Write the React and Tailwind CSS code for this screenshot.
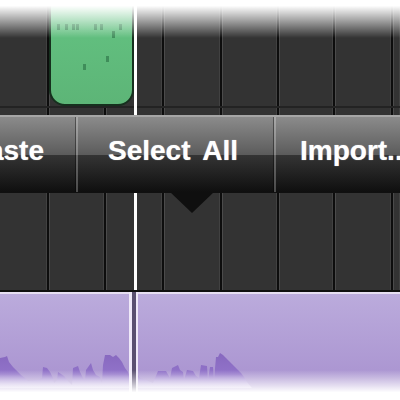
const cells = ['w-[49px]', 'w-[57px]', 'w-[58px]', 'w-[58px]', 'w-[57px]', 'w-[56px]', 'w-[58px]', 'w-[7px]'];

const notes = [
  [57, 24, 'h-[6px]'], [65, 24, 'h-[6px]'], [72, 24, 'h-[6px]'], [76, 24, 'h-[6px]'], [94, 24, 'h-[6px]'],
  [100, 24, 'h-[6px]'], [119, 24, 'h-[6px]'], [112, 31, 'h-[7px]'], [106, 56, 'h-[6px]'], [83, 64, 'h-[6px]'],
];

function Grid({ className }) {
  return (
    <div className={'flex ' + className}>
      {cells.map((w, i) => (
        <div key={i} className={w + ' h-full shrink-0 border-r-2 border-[#0d0d0d] shadow-[1px_0_0_#4b4b4b,inset_-1px_0_0_#414141] last:border-r-0'} />
      ))}
    </div>
  );
}

function MenuItem({ width, justify, children }) {
  return (
    <div className={width + ' ' + justify + ' shrink-0 h-full flex items-center pb-[8px] border-r-2 border-r-white/25 shadow-[inset_-1px_0_0_#00000066] last:border-r-0 last:shadow-none overflow-hidden whitespace-nowrap'}>
      {children}
    </div>
  );
}

function Waveform() {
  return (
    <svg className="absolute left-0 bottom-0 w-[400px] h-[108px]" viewBox="0 292 400 108">
      <defs>
        <linearGradient id="wave" gradientUnits="userSpaceOnUse" x1="0" y1="353" x2="0" y2="388">
          <stop offset="0" stopColor="#8768bf" />
          <stop offset="0.6" stopColor="#9173c9" />
          <stop offset="1" stopColor="#cfc2e8" />
        </linearGradient>
      </defs>
      <path
        fill="url(#wave)"
        d="M0 358L5 357L7 356L9 362L13 367L17 371L21 375L25 378L28 381L38 380L42 378L43 367L47 368L50 372L53 378L54 383L57 380L58 372L64 376L68 381L72 385L73 368L78 366L80 372L83 378L85 380L86 370L91 363L93 370L96 375L100 377L102 383L103 365L105 355L110 355L113 357L116 355L119 358L122 362L125 368L128 372L130 378L132 388H0Z"
      />
      <path
        fill="url(#wave)"
        d="M138 375L140 378L146 380L153 383L158 371L166 371L170 378L172 368L176 366L178 365L180 370L183 372L184 380L187 370L193 371L196 376L199 378L201 365L207 366L208 380L210 367L213 367L214 380L216 357L218 357L220 353L223 355L226 358L229 361L232 364L235 367L238 370L241 373L244 377L247 382L252 388H138Z"
      />
    </svg>
  );
}

export default function App() {
  return (
    <div className="relative w-[400px] h-[400px] overflow-hidden bg-white flex flex-col font-['Liberation_Sans',Arial,sans-serif]">
      {/* top track */}
      <div className="relative h-[115px] shrink-0 bg-[#333333]">
        <Grid className="h-full" />
        <div className="absolute left-0 right-0 top-[106px] h-[2px] bg-[#232323]" />
        <div className="absolute left-[49px] top-[-10px] w-[85px] h-[116px] rounded-b-[16px] bg-gradient-to-b from-[#64c483] to-[#5db577] border-2 border-[#16301e]">
          {notes.map(([x, y, h], i) => (
            <span key={i} className={'absolute w-[3px] bg-[#3f8d5a] ' + h} style={{ left: x - 51, top: y + 8 }} />
          ))}
        </div>
        <div className="absolute left-[134px] top-0 bottom-0 w-[3px] bg-white" />
      </div>

      {/* popup menu */}
      <div className="relative z-10 h-[78px] shrink-0 flex border-t-2 border-[#a6a6a6] border-b border-b-[#101010] text-white font-bold text-[28px] [word-spacing:5px] [text-shadow:0_0_1px_#ffffffaa] bg-[linear-gradient(#8b8b8b_0%,#5c5c5c_50%,#343434_51%,#0f0f0f_100%)]">
        <svg className="absolute left-[170px] top-[75px] w-[44px] h-[22px]" viewBox="0 0 44 22">
          <polygon points="0,0 44,0 22,21" fill="#0f0f0f" />
        </svg>
        <MenuItem width="w-[78px]" justify="justify-end pr-[32px]">Paste</MenuItem>
        <MenuItem width="w-[198px]" justify="justify-start pl-[30px]">Select All</MenuItem>
        <MenuItem width="w-[124px]" justify="justify-start pl-[24px]">Import...</MenuItem>
      </div>

      {/* lower track */}
      <div className="relative h-[99px] shrink-0 bg-[#333333] border-b-2 border-b-[#0f0f0f]">
        <Grid className="h-full" />
        <div className="absolute left-[134px] top-0 bottom-0 w-[3px] bg-white" />
      </div>

      {/* audio region */}
      <div className="relative flex-1 bg-gradient-to-b from-[#bbabdc] to-[#a68fce] border-t-2 border-[#e6def2]">
        <Waveform />
        <div className="absolute left-[129px] top-[-2px] bottom-0 w-[3px] bg-[#efe9f8]" />
        <div className="absolute left-[132px] top-[-2px] bottom-0 w-[4px] bg-[#5a5070]" />
        <div className="absolute left-[136px] top-[-2px] bottom-0 w-[2px] bg-[#efe9f8]" />
      </div>

      {/* white fades top and bottom */}
      <div className="absolute z-20 left-0 right-0 top-0 h-[38px] bg-gradient-to-b from-white from-15% to-transparent" />
      <div className="absolute z-20 left-0 right-0 bottom-0 h-[30px] bg-gradient-to-t from-white from-25% to-transparent" />
    </div>
  );
}
